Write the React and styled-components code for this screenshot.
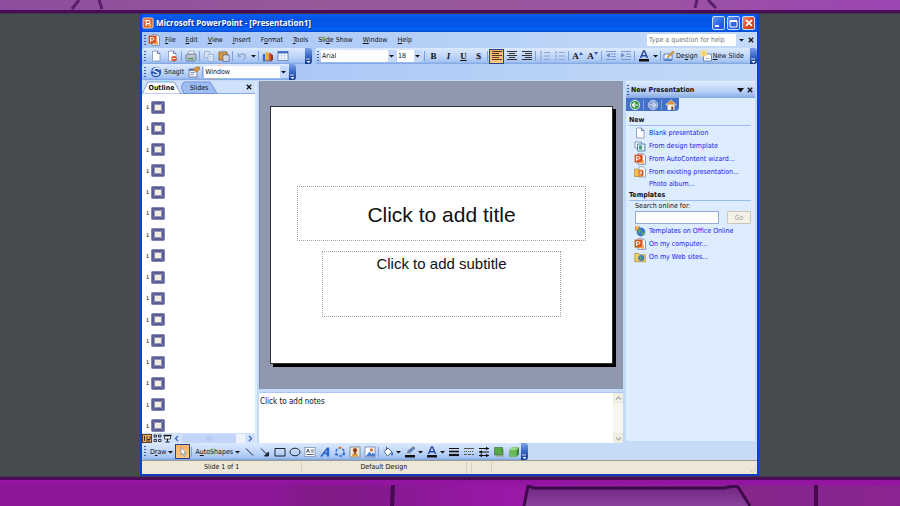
import React from "react";
import styled, { createGlobalStyle, css } from "styled-components";

const Global = createGlobalStyle`
  *, *::before, *::after { box-sizing: border-box; }
  html, body, #root { height: 100%; }
  body { margin: 0; background: #464b4d; }
  body, button, input, select, textarea {
    font-family: "DejaVu Sans Condensed", "Noto Sans", "Liberation Sans", sans-serif;
    font-size: 7px;
    line-height: 10px;
    color: #111;
  }
  button { border: 0; padding: 0; background: none; }
  h1, h2, p, ul { margin: 0; padding: 0; list-style: none; }
`;

/* ---------- page frame ---------- */

const Page = styled.div`
  min-height: 100vh;
  display: grid;
  grid-template-rows: 14px 1fr 30px;
`;
const Band = styled.svg`
  display: block;
  width: 100%;
  height: 100%;
`;
const Stage = styled.main`
  display: grid;
  grid-template-columns: 140fr 619fr 141fr;
`;
const Frame = styled.section`
  grid-column: 2;
  display: flex;
  flex-direction: column;
  background: #c3daf8;
  border: 2px solid #0a3fe0;
  border-top: 0;
  border-bottom-color: #1238c8;
  min-width: 0;
`;

/* ---------- title and menu ---------- */

const TitleBar = styled.header`
  display: flex;
  align-items: center;
  height: 18px;
  padding: 0 2px 0 0;
  gap: 2px;
  background: linear-gradient(#0a5cf0, #0354e6 30%, #0458ee 70%, #0566fa 85%, #0347d0);
`;
const Title = styled.h1`
  flex: 1;
  font-size: 8px;
  line-height: 12px;
  font-family: "Open Sans", "Noto Sans", sans-serif;
  font-weight: 700;
  color: #fff;
  text-shadow: 1px 1px 0 #0a2f90;
`;
const Caption = styled.button`
  width: 13px;
  height: 14px;
  display: grid;
  place-items: center;
  border: 1px solid #c8dcfc;
  border-radius: 2px;
  background: ${(p) =>
    p.$close
      ? "linear-gradient(135deg, #f0926c, #e0502a 50%, #c83c10)"
      : "linear-gradient(135deg, #6f9cf5, #3068e8 50%, #1e50d0)"};
`;
const CaptionGroup = styled.div`
  display: flex;
  gap: 2px;
`;
const MenuBar = styled.nav`
  display: flex;
  align-items: center;
  height: 16px;
  padding: 0 1px 0 2px;
  background: linear-gradient(90deg, #a9c6f6, #c3daf8);
`;
const MenuItem = styled.button`
  padding: 0 5px;
  u { text-underline-offset: 1px; }
`;
const Menus = styled.div`
  display: flex;
  flex: 1;
`;

/* ---------- toolbars ---------- */

const ToolRow = styled.div`
  display: flex;
  height: 16px;
  gap: 3px;
  background: linear-gradient(90deg, #a3c2f5, #c3daf8);
`;
const Tools = styled.div`
  display: flex;
  align-items: center;
  flex: ${(p) => (p.$grow ? 1 : "none")};
  min-width: 0;
  width: ${(p) => p.$width || "auto"};
  padding-left: 2px;
  border-radius: 3px;
  background: linear-gradient(#dbe9fd, #c4d9f9 45%, #a6c4f3 85%, #7ea4e0);
`;
const Grip = styled.span`
  flex: none;
  width: 2px;
  height: 11px;
  margin-right: 2px;
  background: repeating-linear-gradient(#3d5c9c 0 1px, transparent 1px 3px);
`;
const Sep = styled.span`
  flex: none;
  width: 1px;
  height: 10px;
  margin: 0 1px;
  background: #7ea0dc;
`;
const Cap = styled.span`
  flex: none;
  align-self: stretch;
  display: grid;
  place-items: end center;
  width: 7px;
  margin-left: auto;
  border-radius: 0 3px 3px 0;
  background: linear-gradient(#78a2ea, #3a68c4 50%, #0a3490);
`;
const Tool = styled.button`
  flex: none;
  display: flex;
  align-items: center;
  justify-content: center;
  width: ${(p) => p.$width || "15px"};
  height: 15px;
  ${(p) =>
    p.$on &&
    css`
      border: 1px solid #27408b;
      background: linear-gradient(#fbb26a, #fdc880);
    `}
`;
const LabelTool = styled.button`
  flex: none;
  display: flex;
  align-items: center;
  gap: 1px;
  padding: 0 1px;
  white-space: nowrap;
  u { text-underline-offset: 1px; }
`;
const MenuTool = styled(LabelTool)`
  gap: 2px;
  padding: 0 2px;
`;
const Letter = styled.span`
  font: 700 9px/11px "Liberation Serif", serif;
  font-style: ${(p) => (p.$italic ? "italic" : "normal")};
  text-decoration: ${(p) => (p.$under ? "underline" : "none")};
  text-shadow: ${(p) => (p.$shadow ? "1px 1px 0 #9ab" : "none")};
`;
const Field = styled.label`
  flex: none;
  display: flex;
  align-items: center;
  width: ${(p) => p.$width};
  height: 12px;
  margin-right: 1px;
  padding: 0 2px 0 1px;
  background: linear-gradient(90deg, #fff calc(100% - 8px), #c4d9f9 calc(100% - 8px));
`;
const Select = styled.select`
  appearance: none;
  flex: 1;
  min-width: 0;
  height: 12px;
  padding: 0;
  border: 0;
  outline: 0;
  background: transparent;
`;
const Question = styled.input`
  width: 89px;
  height: 12px;
  padding: 0 2px;
  border: 0;
  background: #fff;
  &::placeholder { color: #777; opacity: 1; }
`;
const SmallButton = styled.button`
  display: grid;
  place-items: center;
  width: ${(p) => p.$width || "10px"};
  height: 11px;
`;

/* ---------- body ---------- */

const Body = styled.div`
  flex: 1;
  display: grid;
  grid-template-columns: 115px minmax(0, 1fr) 132px;
  column-gap: 2px;
  min-height: 363px;
  padding-top: 1px;
  background: #c3daf8;
`;
const Outline = styled.aside`
  display: flex;
  flex-direction: column;
  border-right: 2px solid #dcebff;
  background: #fff;
`;
const Tabs = styled.div`
  display: flex;
  height: 13px;
  background: #cfe1fb;
  border-bottom: 1px solid #86a8e4;
`;
const Tab = styled.button`
  position: relative;
  z-index: 0;
  width: ${(p) => (p.$on ? "39px" : "36px")};
  height: 13px;
  padding: 0;
  font-weight: ${(p) => (p.$on ? 700 : 400)};
`;
const TabShape = styled.svg`
  position: absolute;
  inset: 0;
  z-index: -1;
  width: 100%;
  height: 100%;
`;
const TabClose = styled(SmallButton)`
  margin-left: auto;
  margin-right: 1px;
`;
const Slides = styled.ul`
  flex: 1;
  display: flex;
  flex-direction: column;
  justify-content: space-between;
  padding: 6px 0 0 4px;
`;
const SlideRow = styled.li`
  display: flex;
  align-items: center;
  gap: 2px;
  height: 14px;
  font-size: 5px;
  line-height: 6px;
  font-weight: 700;
  color: #555;
`;
const Views = styled.div`
  display: flex;
  align-items: center;
  height: 10px;
  background: #cfe1fb;
`;
const HTrack = styled.div`
  flex: 1;
  display: flex;
  height: 9px;
  background: #eef3fb;
`;
const HThumb = styled.span`
  width: 54px;
  display: grid;
  place-items: center;
  border-radius: 2px;
  background: #c3d5fa;
`;
const Center = styled.div`
  display: grid;
  grid-template-rows: 1fr 51px;
  row-gap: 3px;
  min-width: 0;
`;
const Canvas = styled.div`
  display: grid;
  place-items: center;
  padding: 0 10px 0 10px;
  border-left: 1px solid #7a88a8;
  background: #8f98ae;
`;
const Slide = styled.article`
  width: 100%;
  aspect-ratio: 4 / 3;
  display: grid;
  grid-template-rows: 79fr 56fr 10fr 66fr 46fr;
  border: 1px solid #333;
  background: #fff;
  box-shadow: 3px 3px 0 #000;
`;
const Placeholder = styled.div`
  grid-row: ${(p) => p.$row};
  width: ${(p) => p.$width};
  display: flex;
  align-items: ${(p) => (p.$row === 2 ? "center" : "flex-start")};
  justify-content: center;
  justify-self: center;
  padding-top: ${(p) => (p.$row === 2 ? "2px" : "0")};
  border: 1px dotted #a4a4a4;
  font-family: "Liberation Sans", Arial, sans-serif;
  font-size: ${(p) => p.$size};
  line-height: 24px;
  color: #111;
`;
const Notes = styled.div`
  display: flex;
  border-top: 1px solid #a9c6f6;
  background: #fff;
`;
const NotesText = styled.textarea`
  flex: 1;
  min-width: 0;
  padding: 4px 1px;
  border: 0;
  outline: 0;
  resize: none;
  font-size: 8px;
  background: transparent;
`;
const VTrack = styled.div`
  display: flex;
  flex-direction: column;
  justify-content: space-between;
  width: 10px;
  background: #f7f6f2;
`;
const VButton = styled.button`
  display: grid;
  place-items: center;
  height: 10px;
  border: 1px solid #ebe9e0;
  background: #f1efe6;
`;

/* ---------- task pane ---------- */

const Pane = styled.aside`
  display: flex;
  flex-direction: column;
  margin-bottom: 2px;
  padding-top: 1px;
  border-right: 2px solid #c3daf8;
  border-left: 1px solid #c3daf8;
  background: #ddecfe;
`;
const PaneHead = styled.div`
  display: flex;
  align-items: center;
  height: 16px;
  padding: 0 0 0 1px;
  border-radius: 3px 3px 0 0;
  background: linear-gradient(#dbe9fd, #b6cff6 60%, #86a9e4);
`;
const PaneTitle = styled.h2`
  flex: 1;
  font-size: 7px;
  font-weight: 700;
  line-height: 10px;
`;
const PaneNav = styled.div`
  display: flex;
  align-items: center;
  align-self: flex-start;
  height: 13px;
  padding: 0 1px;
  border-radius: 0 0 4px 0;
  background: #4472c8;
`;
const Group = styled.section`
  padding: ${(p) => (p.$first ? "5px 4px 0 3px" : "2px 4px 0 3px")};
`;
const GroupTitle = styled.h2`
  height: 10px;
  font-size: 7px;
  font-weight: 700;
  line-height: 9px;
  border-bottom: 1px solid #9cbcf0;
`;
const LinkRow = styled.li`
  display: flex;
  align-items: center;
  gap: 3px;
  height: ${(p) => (p.$short ? "11px" : "13px")};
  padding-left: ${(p) => (p.$short ? "20px" : "5px")};
  white-space: nowrap;
`;
const Link = styled.a`
  color: #1a1af0;
  text-decoration: none;
`;
const Search = styled.form`
  display: grid;
  grid-template-columns: 84px 24px;
  justify-content: space-between;
  padding: 0 0 0 6px;
  label { grid-column: 1 / -1; line-height: 10px; }
`;
const SearchBox = styled.input`
  min-width: 0;
  width: 84px;
  height: 13px;
  border: 1px solid #8fadd8;
  background: #fff;
`;
const Go = styled.button`
  height: 13px;
  border: 1px solid #c9c7ba;
  border-radius: 1px;
  background: #f3f1e8;
  color: #a8a698;
`;

/* ---------- bottom bars ---------- */

const DrawRow = styled.div`
  display: flex;
  height: 17px;
  background: #c5dbf7;
`;
const Status = styled.footer`
  display: grid;
  grid-template-columns: 160fr 164fr 5fr 20fr 265fr;
  height: 14px;
  align-items: center;
  border-top: 1px solid #9a9a94;
  background: #ece7d6;
  text-align: center;
`;
const StatusCell = styled.span`
  height: 11px;
  border-right: 1px solid #d4cfc0;
`;
const Corner = styled.span`
  display: flex;
  justify-content: flex-end;
  align-self: end;
`;

/* ---------- icons ---------- */

const Svg = ({ w = 12, h = 12, vb, children }) => (
  <svg width={w} height={h} viewBox={vb || `0 0 ${w} ${h}`} fill="none" aria-hidden="true">
    {children}
  </svg>
);
const Arrow = () => (
  <Svg w={5} h={4}><path d="M0 1h5L2.5 3.6z" fill="#111" /></Svg>
);
const Cross = ({ c = "#111", s = 6 }) => (
  <Svg w={s} h={s} vb="0 0 6 6"><path d="M.8.8l4.4 4.4M5.2.8L.8 5.2" stroke={c} strokeWidth="1.3" /></Svg>
);
const PptIcon = () => (
  <Svg>
    <rect x="1" y="1" width="10" height="10" rx="1" fill="#e2622e" stroke="#f6c7a4" />
    <path d="M4.300 9V3.500h2a1.600 1.600 0 010 3.200h-2" stroke="#fff" strokeWidth="1.200" />
    <circle cx="8" cy="8.300" r="1.300" fill="#f8c060" />
    <path d="M2 4.500L3.500 2.500" stroke="#f8d0a0" />
  </Svg>
);
const DocIcon = ({ children }) => (
  <Svg>
    <path d="M2.5 1h5L10 3.4V11H2.5z" fill="#fff" stroke="#7f94b8" strokeWidth=".8" />
    <path d="M7.5 1v2.5H10" stroke="#4c6494" strokeWidth=".8" />
    {children}
  </Svg>
);
const PptDoc = () => (
  <Svg>
    <path d="M4 .8h5L11.5 3v8.300H4z" fill="#fff" stroke="#6478a4" strokeWidth=".8" />
    <rect x=".6" y="1.600" width="8" height="8" fill="#d9531e" />
    <path d="M2.600 8V3.600h2a1.300 1.300 0 010 2.600h-2" stroke="#fff" />
    <path d="M6.500 9l3.500-2v3.500h-3z" fill="#f2a24c" />
  </Svg>
);
const Denied = () => (
  <DocIcon><circle cx="8" cy="8.6" r="2.7" fill="#e04c1c" /><path d="M6.4 8.6h3.2" stroke="#fff" /></DocIcon>
);
const Printer = () => (
  <Svg>
    <path d="M4 1.2h5.5L8.6 5H3z" fill="#fff" stroke="#8492ac" strokeWidth=".7" />
    <path d="M1 5l1.5-1h8L11 5v4.2L9.6 11H2L1 9.6z" fill="#b9c2cf" stroke="#5d6b83" strokeWidth=".8" />
    <path d="M3 8.6h5.5" stroke="#4a9a46" strokeWidth="1.4" />
  </Svg>
);
const Copy = () => (
  <Svg>
    <path d="M1.5 1.5h5v6h-5z" fill="#dce6f6" stroke="#9cb0d4" strokeWidth=".9" />
    <path d="M5 4.5h5.5v6.5H5z" fill="#e4ecf9" stroke="#9cb0d4" strokeWidth=".9" />
    <path d="M6.3 6.5h3M6.3 8.5h3" stroke="#a8bada" strokeWidth=".7" />
  </Svg>
);
const Paste = () => (
  <Svg>
    <path d="M1 2h8v8H1z" fill="#d99a3c" stroke="#8a5c1c" strokeWidth=".8" />
    <path d="M3 .8h4v2H3z" fill="#999fae" />
    <path d="M5 5h6v6.2H5z" fill="#fff" stroke="#3c5490" strokeWidth=".8" />
    <path d="M6.3 7h3.4M6.3 9h3.4" stroke="#6a86c0" strokeWidth=".7" />
  </Svg>
);
const Undo = () => (
  <Svg><path d="M2 3v3.4h3.4M2.3 6C4 3.4 8.6 3 9.2 6c.3 1.700-.8 3-2 3.800" stroke="#8fa6d2" strokeWidth="1.3" /></Svg>
);
const Chart = () => (
  <Svg>
    <path d="M.8 10.500V4h2.400v6.500z" fill="#3b63c8" />
    <path d="M3.600 10.500V2h2.700v8.500z" fill="#e8b428" />
    <path d="M6.700 10.500V3h2.400v7.500z" fill="#d8502c" />
    <path d="M9 4l2 1v5l-2 1z" fill="#8c3420" />
    <path d="M.8 10.900h9" stroke="#444" strokeWidth=".8" />
  </Svg>
);
const TableIcon = () => (
  <Svg>
    <rect x="1" y="1.500" width="10" height="9" fill="#fff" stroke="#5d80c4" strokeWidth=".9" />
    <path d="M1 2.500h10" stroke="#3d68c0" strokeWidth="2" />
    <path d="M1 5.800h10M1 8.200h10M4.300 3v7.500M7.600 3v7.500" stroke="#b3c7ec" strokeWidth=".7" />
  </Svg>
);
const Lines = ({ kind, c = "#333" }) => {
  const x = { left: [1, 1, 1, 1, 1], center: [1, 3, 1, 3, 1], right: [1, 4, 1, 4, 1] }[kind];
  const w = { left: [10, 7, 10, 7, 10], center: [10, 6, 10, 6, 10], right: [10, 7, 10, 7, 10] }[kind];
  return <Svg>{x.map((v, i) => <rect key={i} x={v} y={1 + i * 2} width={w[i]} height="1" fill={c} />)}</Svg>;
};
const ListIcon = ({ dots }) => (
  <Svg>
    <path d="M5 2.500h6M5 6h6M5 9.500h6" stroke="#8fa6d2" />
    <path d={dots ? "M1 2.500h2M1 6h2M1 9.500h2" : "M2 1v3M2 4.700v3M2 8.300v3"} stroke="#8fa6d2" strokeWidth="1.300" />
  </Svg>
);
const Indent = ({ out }) => (
  <Svg>
    <path d="M1 1.500h10M6 4h5M6 6.500h5M1 9.500h10" stroke="#7f99cc" />
    <path d={out ? "M5 2.800v5L1 5.300z" : "M1 2.800v5l4-2.500z"} fill="#6f8cc8" />
  </Svg>
);
const Mark = ({ up }) => (
  <Svg w={4} h={10}><path d={up ? "M0 4l2-3 2 3z" : "M0 1h4L2 4z"} fill="#2c56b8" /></Svg>
);
const DesignIcon = () => (
  <Svg>
    <path d="M1 4h8v6.500H1z" fill="#fff" stroke="#4c70b8" strokeWidth=".9" />
    <path d="M1.500 8.500h7v1.600h-7z" fill="#4b82dc" />
    <path d="M4 8l1-2.300L10 1l1.300 1.300-4.800 4.500z" fill="#e8a83c" stroke="#8a5c1c" strokeWidth=".5" />
  </Svg>
);
const NewSlideIcon = () => (
  <Svg>
    <path d="M3.500 4h8v7h-8z" fill="#fff" stroke="#5d80c4" strokeWidth=".9" />
    <path d="M1 1h5.500v5H1z" fill="#fbd06c" stroke="#f0e2a0" />
    <path d="M5.500 8.500h4" stroke="#9ab" strokeWidth=".8" />
  </Svg>
);
const SnagIcon = () => (
  <Svg>
    <circle cx="6" cy="6" r="5.300" fill="#2a5ab8" />
    <path d="M9.800 3.500C7.400.8 3.400 2.200 3.600 4.200c.3 1.900 5 1.400 4.900 3.500-.1 1.700-3.700 2.200-5.600.2" stroke="#fff" strokeWidth="1.300" />
    <path d="M1 4.800h4" stroke="#9fc4ff" />
  </Svg>
);
const SnagProps = () => (
  <Svg>
    <path d="M1 3h8v8H1z" fill="#f3f4f8" stroke="#6070a0" strokeWidth=".8" />
    <path d="M1 3h8v1.800H1z" fill="#4c70c0" />
    <path d="M2.500 6.500h4M2.500 8.500h3" stroke="#8090b8" />
    <path d="M5 4l3-3h3.500v2.500L8 6z" fill="#e0953a" stroke="#8a5c1c" strokeWidth=".5" />
  </Svg>
);
const Thumb = () => (
  <Svg w={14} h={13}>
    <rect x=".5" y=".5" width="13" height="12" rx="1" fill="#5b5c92" stroke="#8187b8" />
    <path d="M2.500 2.500l2 2M11.500 2.500l-2 2M2.500 10.500l2-2M11.500 10.500l-2-2" stroke="#b4b6cc" strokeWidth=".9" />
    <rect x="3.500" y="3.500" width="7" height="6" fill="#f3f0e2" stroke="#8c8eb8" strokeWidth=".8" />
  </Svg>
);
const ViewNormal = () => (
  <Svg w={10} h={9}>
    <rect x=".5" y=".5" width="9" height="8" fill="#f0b060" stroke="#5c3c24" />
    <path d="M2.500 2v5M5 2v3.500h3V2M4 7h4" stroke="#3c2c20" />
  </Svg>
);
const ViewSorter = () => (
  <Svg w={9} h={9}><path d="M1 1h2.500v2H1zM5.500 1H8v2H5.500zM1 5.500h2.500v2H1zM5.500 5.500H8v2H5.500z" stroke="#222" strokeWidth=".9" /></Svg>
);
const ViewShow = () => (
  <Svg w={9} h={9}><path d="M.5 1.500h8" stroke="#111" strokeWidth="1.400" /><path d="M1.500 2h6v3h-6z" stroke="#222" fill="#fff" strokeWidth=".8" /><path d="M4.500 5v2.500M2.500 8h4" stroke="#111" /></Svg>
);
const Chev = ({ d, c = "#335" }) => {
  const p = { left: "M4 1L1.500 3.500 4 6", right: "M2 1l2.500 2.500L2 6", up: "M1 4.500L3.500 2 6 4.500", down: "M1 2.500L3.500 5 6 2.500" }[d];
  return <Svg w={7} h={7}><path d={p} stroke={c} strokeWidth="1.300" /></Svg>;
};
const NavIcon = ({ kind }) => (
  <Svg>
    {kind === "home" ? (
      <>
        <path d="M2.500 5.500h7V11h-7z" fill="#f6f1e2" />
        <path d="M6 .8l5.300 5H.7z" fill="#e0903c" stroke="#fff" strokeWidth=".5" />
        <path d="M6.300 7.500h2V11h-2z" fill="#7a4a20" />
      </>
    ) : (
      <>
        <circle cx="6" cy="6" r="4.700" fill={kind === "back" ? "#3f9a4a" : "#8fa6d8"} stroke={kind === "back" ? "#dfe8ee" : "#b9c8ea"} />
        <path d={kind === "back" ? "M9 6H3.500M6 3.400L3.400 6 6 8.600" : "M3 6h5.500M6 3.400L8.600 6 6 8.600"} stroke={kind === "back" ? "#fff" : "#d5dff4"} strokeWidth="1.200" />
      </>
    )}
  </Svg>
);
const Template = () => (
  <Svg>
    <path d="M1 2h6.500v6H1z" fill="#fff" stroke="#5c86a8" strokeWidth=".8" />
    <path d="M3.500 4h7.500v7H3.500z" fill="#dfeef4" stroke="#3c6c94" strokeWidth=".8" />
    <path d="M5 5.500h3v4H5z" fill="#4d9c80" />
  </Svg>
);
const Existing = () => (
  <Svg>
    <path d="M5 .8h4L11.500 3v8H5z" fill="#fff" stroke="#7f94b8" strokeWidth=".8" />
    <path d="M.6 3h3l1 1h4v6.500h-8z" fill="#f4c04c" stroke="#a87820" strokeWidth=".6" />
    <rect x="4.500" y="4.500" width="5" height="5" fill="#d9531e" />
    <path d="M6 8.800V5.800h1.500v1.600H6" stroke="#fff" strokeWidth=".8" />
  </Svg>
);
const Online = () => (
  <Svg>
    <path d="M1 1.500h5v4H1z" fill="#e0702c" />
    <circle cx="7" cy="7" r="4.400" fill="#3e78c4" />
    <path d="M4 4.500c2-1 3 .5 3 1.500S5.500 8 4 8zM7.500 8l3-1.500c.4 2-.6 3.500-2 4z" fill="#58b04c" />
    <circle cx="3" cy="3" r="1.600" fill="#f4c04c" />
  </Svg>
);
const WebFolder = () => (
  <Svg>
    <path d="M.8 2.500h4l1 1.200h5.400v7H.8z" fill="#f4cf68" stroke="#a88430" strokeWidth=".7" />
    <circle cx="7.200" cy="7" r="3" fill="#3e78c4" />
    <path d="M5.500 6c1.300-1 2 0 2.500 1s-1 2-2 1.500z" fill="#58b04c" />
  </Svg>
);
const Stroke = ({ d, w = 1, c = "#1c2433", fill = "none" }) => (
  <Svg><path d={d} stroke={c} strokeWidth={w} fill={fill} /></Svg>
);
const TextBoxIcon = () => (
  <Svg>
    <rect x="1" y="1.500" width="10" height="9" fill="#fff" stroke="#8090a8" strokeWidth=".8" />
    <path d="M2.500 6.500L4 3l1.500 3.500M3 5.300h2M6.800 4h3M6.800 6h3M2.500 8.500h7.300" stroke="#33405c" strokeWidth=".8" />
  </Svg>
);
const WordArt = () => (
  <Svg><path d="M1 10.500L8 1.500h2.200v9H7.600V8.300H4.800l-1.300 2.200zM6 6.500h1.700V4.300z" fill="#2f68cc" /></Svg>
);
const Diagram = () => (
  <Svg>
    <circle cx="6" cy="6" r="4" stroke="#2f68cc" strokeWidth="1.400" strokeDasharray="2.800 1.400" />
    <circle cx="6" cy="1.800" r="1.300" fill="#e07830" /><circle cx="2.200" cy="8.200" r="1.200" fill="#3c70c8" /><circle cx="9.800" cy="8.200" r="1.200" fill="#2f68cc" />
  </Svg>
);
const ClipArt = () => (
  <Svg>
    <rect x="1" y="1" width="10" height="10" fill="#f3ead6" stroke="#707888" strokeWidth=".8" />
    <circle cx="6" cy="4.200" r="2.200" fill="#c8502a" /><path d="M3 10.500c0-5 6-5 6 0z" fill="#e09a3c" /><path d="M6 3v5" stroke="#222" />
  </Svg>
);
const Picture = () => (
  <Svg>
    <rect x="1" y="1" width="10" height="10" fill="#fff" stroke="#707ca0" strokeWidth=".8" />
    <path d="M1.500 10.500l4-5 2 2.500 1.500-1.500 2 2v2z" fill="#4f7ccc" /><circle cx="7.500" cy="4" r="1.700" fill="#e07830" />
  </Svg>
);
const Fill = () => (
  <Svg>
    <path d="M2 5.500L6 2l4 4-4.500 4z" fill="#fff" stroke="#40587c" strokeWidth=".9" /><path d="M4.500 4V.8" stroke="#40587c" />
    <path d="M10 5.500c1.500 2 1.500 3.500.5 4s-2-.8-1-3z" fill="#3b6fd4" />
  </Svg>
);
const Pen = () => (
  <Svg><path d="M3 7l1.200-2.500L9.500.6l1.600 1.700-5 4.500z" fill="#4f84dc" stroke="#a8742c" strokeWidth=".6" /><path d="M1 9h10v2.500H1z" fill="#111" /></Svg>
);
const FontColor = () => (
  <Svg><path d="M2.500 8L5.500 1h1l3 7M4 5.700h4" stroke="#26479c" strokeWidth="1.400" /><path d="M1 9h10v2.500H1z" fill="#111" /></Svg>
);
const ArrowStyle = () => (
  <Svg><path d="M1 2.500h10M1 6h10M1 9.500h10" stroke="#111" /><path d="M8 .8l3 1.700-3 1.700zM4 4.300L1 6l3 1.700zM8 7.800l3 1.700-3 1.700zM4 7.800L1 9.500l3 1.700z" fill="#111" /></Svg>
);
const Shadow = () => (
  <Svg><path d="M3 3h8v8H3z" fill="#a5b3a8" /><path d="M1.500 1.500h8v7.500h-8z" fill="#58a848" stroke="#356c2c" strokeWidth=".6" /></Svg>
);
const Cube = () => (
  <Svg><path d="M1.500 4L4 1.200h7V8L8.500 11h-7z" fill="#3f8438" /><path d="M1.500 4h7v7h-7z" fill="#6cbc5c" /><path d="M1.500 4L4 1.200h7L8.500 4z" fill="#9cdc8c" /></Svg>
);
const CapMark = () => (
  <Svg w={5} h={6}><path d="M0 1h4" stroke="#fff" strokeWidth=".8" /><path d="M.5 3h4l-2 2.300z" fill="#fff" /></Svg>
);

/* ---------- data ---------- */

const menus = ["File", "Edit", "View", "Insert", "Format", "Tools", "Slide Show", "Window", "Help"];
const accel = { Format: 1, "Slide Show": 3 };
const Accel = ({ text, at = 0 }) => (
  <>{text.slice(0, at)}<u>{text[at]}</u>{text.slice(at + 1)}</>
);
const newLinks = [
  ["Blank presentation", DocIcon],
  ["From design template", Template],
  ["From AutoContent wizard...", PptDoc],
  ["From existing presentation...", Existing],
  ["Photo album...", null],
];
const templateLinks = [
  ["Templates on Office Online", Online],
  ["On my computer...", PptDoc],
  ["On my Web sites...", WebFolder],
];
const LinkList = ({ items }) => (
  <ul>
    {items.map(([text, Icon]) => (
      <LinkRow key={text} $short={!Icon}>
        {Icon && <Icon />}
        <Link href="#">{text}</Link>
      </LinkRow>
    ))}
  </ul>
);

const TopBand = () => (
  <Band viewBox="0 0 900 14" preserveAspectRatio="none" aria-hidden="true">
    <defs>
      <linearGradient id="top">
        <stop offset="0" stopColor="#8c4d9c" /><stop offset=".35" stopColor="#96599a" />
        <stop offset=".7" stopColor="#9a55a0" /><stop offset="1" stopColor="#9b45b4" />
      </linearGradient>
    </defs>
    <rect width="900" height="14" fill="url(#top)" />
    <path d="M79 0l-7 9M99 0l3 9M697 0l-2 8M708 0l8 8" stroke="#5a1c6c" strokeWidth="3" />
    <path d="M0 11.500h900" stroke="#4b0b56" strokeWidth="3" />
    <path d="M0 13.500h900" stroke="#40384a" />
  </Band>
);
const BottomBand = () => (
  <Band viewBox="0 0 900 30" preserveAspectRatio="none" aria-hidden="true">
    <defs>
      <linearGradient id="bot">
        <stop offset="0" stopColor="#8b1798" /><stop offset=".3" stopColor="#8b1797" />
        <stop offset=".36" stopColor="#7f1b86" /><stop offset=".42" stopColor="#84198f" />
        <stop offset=".56" stopColor="#9a18a8" /><stop offset=".84" stopColor="#86268c" /><stop offset="1" stopColor="#8a2492" />
      </linearGradient>
      <linearGradient id="slab" x2="0" y2="1"><stop offset="0" stopColor="#702680" /><stop offset="1" stopColor="#8a429e" /></linearGradient>
    </defs>
    <rect width="900" height="30" fill="url(#bot)" />
    <path d="M528 10l6 2h200l18 18H523z" fill="url(#slab)" />
    <path d="M524 30l4-20 6 2h190q10-3 14-1l12 19" fill="none" stroke="#3d0a4a" strokeWidth="3" />
    <path d="M393 9l-1 21M816 9v21" stroke="#44094e" strokeWidth="4" />
    <path d="M0 6.500h900" stroke="#9214a0" strokeWidth="5" />
    <path d="M0 2.500h900" stroke="#4b0b56" strokeWidth="3" />
    <path d="M0 .5h900" stroke="#463c4c" />
  </Band>
);

export default function App() {
  return (
    <Page>
      <Global />
      <TopBand />
      <Stage>
        <Frame>
          <TitleBar>
            <PptIcon />
            <Title>Microsoft PowerPoint - [Presentation1]</Title>
            <CaptionGroup>
              <Caption aria-label="Minimize"><Svg w={9} h={9}><path d="M1 7h4" stroke="#fff" strokeWidth="2" /></Svg></Caption>
              <Caption aria-label="Restore"><Svg w={9} h={9}><path d="M1 2h7v6H1z" stroke="#fff" /><path d="M1 2h7" stroke="#fff" strokeWidth="2" /></Svg></Caption>
              <Caption $close aria-label="Close"><Cross c="#fff" s={8} /></Caption>
            </CaptionGroup>
          </TitleBar>

          <MenuBar>
            <Grip /><PptDoc />
            <Menus>
              {menus.map((m) => (
                <MenuItem key={m}><Accel text={m} at={accel[m]} /></MenuItem>
              ))}
            </Menus>
            <Question placeholder="Type a question for help" aria-label="Type a question for help" />
            <SmallButton aria-label="Help list"><Arrow /></SmallButton>
            <SmallButton aria-label="Close document"><Cross /></SmallButton>
          </MenuBar>

          <ToolRow>
            <Tools $width="170px">
              <Grip />
              <Tool aria-label="New"><DocIcon /></Tool>
              <Tool $width="17px" aria-label="Permission"><Denied /></Tool>
              <Sep />
              <Tool aria-label="Print"><Printer /></Tool>
              <Sep />
              <Tool aria-label="Copy"><Copy /></Tool>
              <Tool aria-label="Paste"><Paste /></Tool>
              <Sep />
              <Tool aria-label="Undo"><Undo /></Tool>
              <Tool $width="8px" aria-label="Undo list"><Arrow /></Tool>
              <Sep />
              <Tool aria-label="Insert chart"><Chart /></Tool>
              <Tool aria-label="Insert table"><TableIcon /></Tool>
              <Cap><CapMark /></Cap>
            </Tools>
            <Tools $grow>
              <Grip />
              <Field $width="75px">
                <Select aria-label="Font" defaultValue="Arial"><option>Arial</option></Select><Arrow />
              </Field>
              <Field $width="25px">
                <Select aria-label="Font size" defaultValue="18"><option>18</option></Select><Arrow />
              </Field>
              <Sep />
              <Tool aria-label="Bold"><Letter>B</Letter></Tool>
              <Tool aria-label="Italic"><Letter $italic>I</Letter></Tool>
              <Tool aria-label="Underline"><Letter $under>U</Letter></Tool>
              <Tool aria-label="Shadow"><Letter $shadow>S</Letter></Tool>
              <Sep />
              <Tool $on aria-label="Align left"><Lines kind="left" c="#5c3a1c" /></Tool>
              <Tool aria-label="Center"><Lines kind="center" /></Tool>
              <Tool aria-label="Align right"><Lines kind="right" /></Tool>
              <Sep />
              <Tool aria-label="Numbering"><ListIcon /></Tool>
              <Tool aria-label="Bullets"><ListIcon dots /></Tool>
              <Sep />
              <Tool aria-label="Increase font size"><Letter>A</Letter><Mark up /></Tool>
              <Tool aria-label="Decrease font size"><Letter>A</Letter><Mark /></Tool>
              <Sep />
              <Tool aria-label="Decrease indent"><Indent out /></Tool>
              <Tool aria-label="Increase indent"><Indent /></Tool>
              <Sep />
              <Tool aria-label="Font color"><FontColor /></Tool>
              <Tool $width="8px" aria-label="Font color list"><Arrow /></Tool>
              <Sep />
              <LabelTool><DesignIcon /><span>De<u>s</u>ign</span></LabelTool>
              <LabelTool><NewSlideIcon /><span><u>N</u>ew Slide</span></LabelTool>
              <Cap><CapMark /></Cap>
            </Tools>
          </ToolRow>

          <ToolRow>
            <Tools $width="154px">
              <Grip />
              <MenuTool><SnagIcon /><span>SnagIt</span></MenuTool>
              <Tool aria-label="Capture properties"><SnagProps /></Tool>
              <Sep />
              <Field $width="84px">
                <Select aria-label="Capture source" defaultValue="Window"><option>Window</option></Select><Arrow />
              </Field>
              <Cap><CapMark /></Cap>
            </Tools>
          </ToolRow>

          <Body>
            <Outline>
              <Tabs>
                <Tab $on>
                  <TabShape viewBox="0 0 40 13" preserveAspectRatio="none" aria-hidden="true">
                    <path d="M0 13L6 1h27l7 12z" fill="#fff" stroke="#7f9fd8" />
                  </TabShape>
                  Outline
                </Tab>
                <Tab>
                  <TabShape viewBox="0 0 36 13" preserveAspectRatio="none" aria-hidden="true">
                    <path d="M3 12.500L0 6l3-5h26l7 11.500z" fill="#9dbdf3" stroke="#6f92d4" />
                  </TabShape>
                  Slides
                </Tab>
                <TabClose aria-label="Close outline"><Cross /></TabClose>
              </Tabs>
              <Slides>
                {Array.from({ length: 16 }, (_, i) => (
                  <SlideRow key={i}><span>1</span><Thumb /></SlideRow>
                ))}
              </Slides>
              <Views>
                <SmallButton aria-label="Normal view"><ViewNormal /></SmallButton>
                <SmallButton aria-label="Slide sorter"><ViewSorter /></SmallButton>
                <SmallButton aria-label="Slide show"><ViewShow /></SmallButton>
                <SmallButton aria-label="Scroll left"><Chev d="left" c="#3c62b4" /></SmallButton>
                <HTrack><HThumb><Svg w={6} h={5}><path d="M1 0v5M3 0v5M5 0v5" stroke="#a9c0f0" /></Svg></HThumb></HTrack>
                <SmallButton aria-label="Scroll right"><Chev d="right" c="#3c62b4" /></SmallButton>
              </Views>
            </Outline>

            <Center>
              <Canvas>
                <Slide>
                  <Placeholder $row={2} $width="85%" $size="21px">Click to add title</Placeholder>
                  <Placeholder $row={4} $width="70%" $size="15px">Click to add subtitle</Placeholder>
                </Slide>
              </Canvas>
              <Notes>
                <NotesText aria-label="Notes" defaultValue="Click to add notes" />
                <VTrack>
                  <VButton aria-label="Scroll up"><Chev d="up" c="#b0aea4" /></VButton>
                  <VButton aria-label="Scroll down"><Chev d="down" c="#b0aea4" /></VButton>
                </VTrack>
              </Notes>
            </Center>

            <Pane>
              <PaneHead>
                <Grip /><PaneTitle>New Presentation</PaneTitle>
                <SmallButton aria-label="Other task panes"><Svg w={7} h={5}><path d="M0 0h7L3.500 4.500z" fill="#111" /></Svg></SmallButton>
                <SmallButton aria-label="Close pane"><Cross /></SmallButton>
              </PaneHead>
              <PaneNav>
                <Tool aria-label="Back"><NavIcon kind="back" /></Tool><Sep />
                <Tool aria-label="Forward"><NavIcon kind="next" /></Tool><Sep />
                <Tool aria-label="Home"><NavIcon kind="home" /></Tool>
              </PaneNav>
              <Group $first>
                <GroupTitle>New</GroupTitle>
                <LinkList items={newLinks} />
              </Group>
              <Group>
                <GroupTitle>Templates</GroupTitle>
                <Search onSubmit={(e) => e.preventDefault()}>
                  <label htmlFor="search">Search online for:</label>
                  <SearchBox id="search" />
                  <Go disabled>Go</Go>
                </Search>
                <LinkList items={templateLinks} />
              </Group>
            </Pane>
          </Body>

          <DrawRow>
            <Tools $width="385px">
              <Grip />
              <MenuTool><span>D<u>r</u>aw</span><Arrow /></MenuTool>
              <Tool $on aria-label="Select objects"><Stroke d="M4 1.500v7.500l1.800-1.600L7 10.500l1.300-.6L7 7h2.300z" w=".7" fill="#fff" c="#7080a8" /></Tool>
              <Sep />
              <MenuTool><span>A<u>u</u>toShapes</span><Arrow /></MenuTool>
              <Tool aria-label="Line"><Stroke d="M2 2.500l7 7" /></Tool>
              <Tool aria-label="Arrow"><Stroke d="M2 2.500l7 7M9.500 6v4h-4z" fill="#1c2433" /></Tool>
              <Tool aria-label="Rectangle"><Stroke d="M1 2.500h10v7.500H1z" /></Tool>
              <Tool aria-label="Oval"><Stroke d="M1 6a5 3.800 0 0110 0 5 3.800 0 01-10 0z" /></Tool>
              <Tool aria-label="Text box"><TextBoxIcon /></Tool>
              <Tool aria-label="WordArt"><WordArt /></Tool>
              <Tool aria-label="Diagram"><Diagram /></Tool>
              <Tool aria-label="Clip art"><ClipArt /></Tool>
              <Tool aria-label="Picture"><Picture /></Tool>
              <Sep />
              <Tool aria-label="Fill color"><Fill /></Tool>
              <Tool $width="7px" aria-label="Fill color list"><Arrow /></Tool>
              <Tool aria-label="Line color"><Pen /></Tool>
              <Tool $width="7px" aria-label="Line color list"><Arrow /></Tool>
              <Tool aria-label="Text color"><FontColor /></Tool>
              <Tool $width="7px" aria-label="Text color list"><Arrow /></Tool>
              <Tool aria-label="Line style"><Svg><path d="M1 2.500h10" stroke="#111" /><path d="M1 5.500h10" stroke="#111" strokeWidth="1.600" /><path d="M1 9h10" stroke="#111" strokeWidth="2.200" /></Svg></Tool>
              <Tool aria-label="Dash style"><Svg><path d="M1 2.500h10" stroke="#555" /><path d="M1 5.500h10" stroke="#555" strokeDasharray="1 1" /><path d="M1 8.500h10" stroke="#555" strokeDasharray="3 1" /></Svg></Tool>
              <Tool aria-label="Arrow style"><ArrowStyle /></Tool>
              <Tool aria-label="Shadow style"><Shadow /></Tool>
              <Tool aria-label="3-D style"><Cube /></Tool>
              <Cap><CapMark /></Cap>
            </Tools>
          </DrawRow>

          <Status>
            <StatusCell>Slide 1 of 1</StatusCell>
            <StatusCell>Default Design</StatusCell>
            <StatusCell />
            <StatusCell />
            <Corner><Svg w={8} h={8}><path d="M7 1L1 7M7 4L4 7" stroke="#b5b09c" strokeDasharray="1 1" /></Svg></Corner>
          </Status>
        </Frame>
      </Stage>
      <BottomBand />
    </Page>
  );
}
